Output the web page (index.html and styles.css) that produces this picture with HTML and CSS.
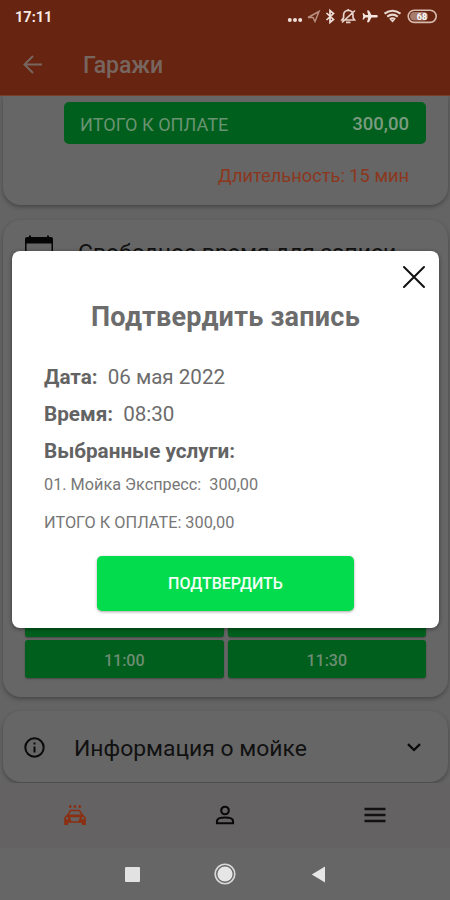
FILE: index.html
```html
<!DOCTYPE html>
<html lang="ru">
<head>
<meta charset="utf-8">
<meta name="viewport" content="width=device-width, initial-scale=1">
<title>Гаражи</title>
<link rel="stylesheet" href="styles.css">
</head>
<body>
<div class="phone">
  <header class="top">
    <div class="status">
      <span class="clock">17:11</span>
      <svg class="status-icons" width="152" height="20" viewBox="0 0 152 20" fill="none">
        <g fill="#efe0da"><circle cx="2.800" cy="13" r="2"/><circle cx="8" cy="13" r="2"/><circle cx="13.200" cy="13" r="2"/></g>
        <path d="M21 10.500 32 4.500 28 14.500 26 10.500Z" stroke="#b98f82" stroke-width="1.500"/>
        <path d="M39.500 6 46.500 12.500 43 15.500V3.500L46.500 6.500 39.500 13" stroke="#efe0da" stroke-width="1.700"/>
        <g stroke="#e6d2ca" stroke-width="1.700"><path d="M55 13H67.500L66 10.800V8A4.700 4.700 0 0 0 56.600 8V10.800ZM61.200 2V4M59 15.300H63.500M55 15.500 68 3.500"/></g>
        <path fill="#f3e5e0" d="M89.500 8H84.500L82 3.500H80L81.200 8H78.300L76.800 6.200H75.600L76.200 9.300 75.600 12.400H76.800L78.300 10.600H81.200L80 15.200H82L84.500 10.600H89.500A1.300 1.300 0 0 0 89.500 8Z"/>
        <g stroke="#e9d8d1" stroke-width="2.100"><path d="M97.500 6.700Q105.500 .9 113.500 6.700M100.200 9.600Q105.500 5.700 110.800 9.600M102.800 12.300Q105.500 10.400 108.200 12.300"/></g><path d="M103.300 13H107.700L105.500 15.600Z" fill="#e9d8d1"/>
        <rect x="121.200" y="3.200" width="28" height="12.200" rx="6.100" stroke="#d8bbb0" stroke-width="1.600"/>
        <rect x="123" y="5" width="18" height="8.600" rx="4.300" fill="#a67c6e"/>
        <text class="battery" x="135" y="12.500" text-anchor="middle" fill="#fff">68</text>
      </svg>
    </div>
    <div class="appbar">
      <svg width="20" height="20" viewBox="0 0 20 20" fill="none" stroke="#77665f" stroke-width="2"><path d="M19 9.500H2M10 1 1.500 9.500 10 18"/></svg>
      <h1 class="appbar-title">Гаражи</h1>
    </div>
  </header>

  <main class="content">
    <section class="card card-total">
      <div class="total"><span class="total-label">ИТОГО К ОПЛАТЕ</span><span class="total-sum">300,00</span></div>
      <p class="duration">Длительность: 15 мин</p>
    </section>
    <section class="card card-slots">
      <div class="slots-head">
        <svg width="28" height="30" viewBox="0 0 28 30"><path fill="#050505" d="M2 2H4V.5H6V2H22V.5H24V2H26Q28 2 28 4V28Q28 30 26 30H2Q0 30 0 28V4Q0 2 2 2ZM1.500 8.500V28H26.500V8.500Z"/></svg>
        <h2 class="slots-title">Свободное время для записи</h2>
      </div>
      <div class="slots">
        <span class="slot">10:00</span><span class="slot">10:30</span>
        <span class="slot">11:00</span><span class="slot">11:30</span>
      </div>
    </section>
    <section class="card card-info">
      <svg width="21" height="21" viewBox="0 0 21 21" fill="none" stroke="#0a0a0a" stroke-width="2"><circle cx="10.500" cy="10.500" r="9.200"/><path d="M10.500 9.500V15.500M10.500 5.500V7.600"/></svg>
      <h2 class="info-title">Информация о мойке</h2>
      <svg width="14" height="9" viewBox="0 0 14 9" fill="none" stroke="#0a0a0a" stroke-width="2.300"><path d="M1 1.200 7 7 13 1.200"/></svg>
    </section>
  </main>

  <nav class="tabs">
    <span class="tab">
      <svg width="24" height="22" viewBox="0 0 24 22" fill="none" stroke="#8b2f12" stroke-width="1.500">
        <path d="M6 2.500H8.500M10.700 2.500H13.200M15.500 2.500H18M7.200 1V4M11.900 1V4M16.800 1V4"/>
        <path d="M4.500 11.500 7.500 6.500H16.500L19.500 11.500"/>
        <path fill="#8b2f12" fill-rule="evenodd" stroke="none" d="M4 10.500H20L22.800 13.500V21H18.800V18.800H5.200V21H1.200V13.500ZM7 13.300 8.500 17.300H15.500L17 13.300ZM3 13.300V15.300H5.500L4.800 13.300ZM19.200 13.300 18.500 15.300H21V13.300Z"/>
      </svg>
    </span>
    <span class="tab">
      <svg width="20" height="20" viewBox="0 0 20 20" fill="none" stroke="#080808" stroke-width="2.100"><circle cx="10" cy="5.500" r="3.800"/><path d="M2 18.200V16Q2 12.500 10 12.500T18 16V18.200Z"/></svg>
    </span>
    <span class="tab">
      <svg width="22" height="16" viewBox="0 0 22 16" stroke="#111" stroke-width="2.400"><path d="M.5 2H21.500M.5 8H21.500M.5 14H21.500"/></svg>
    </span>
  </nav>

  <footer class="system-nav">
    <svg width="15" height="15" viewBox="0 0 15 15"><rect width="15" height="15" rx="1" fill="#e2e2e2"/></svg>
    <svg width="22" height="22" viewBox="0 0 22 22"><circle cx="11" cy="11" r="9.800" fill="none" stroke="#d8d8d8" stroke-width="1.600"/><circle cx="11" cy="11" r="7.600" fill="#e6e6e6"/></svg>
    <svg width="15" height="17" viewBox="0 0 15 17"><path d="M14 .5V16.500L.8 8.500Z" fill="#e6e6e6"/></svg>
  </footer>

  <div class="dialog" role="dialog">
    <svg class="close" width="24" height="24" viewBox="0 0 24 24" stroke="#111" stroke-width="2" stroke-linecap="round"><path d="M2 2 22 22M22 2 2 22"/></svg>
    <h2 class="dialog-title">Подтвердить запись</h2>
    <p class="row"><b>Дата:</b><span>06 мая 2022</span></p>
    <p class="row"><b>Время:</b><span>08:30</span></p>
    <p class="row"><b>Выбранные услуги:</b></p>
    <p class="service"><span>01. Мойка Экспресс:</span><span>300,00</span></p>
    <p class="sum">ИТОГО К ОПЛАТЕ: 300,00</p>
    <button class="confirm">ПОДТВЕРДИТЬ</button>
  </div>
</div>
</body>
</html>
```
FILE: styles.css
```css
* { box-sizing: border-box; }
body { margin: 0; font-family: Roboto, sans-serif; }
h1, h2, p { margin: 0; font-weight: 400; }
svg { display: block; flex: none; }

.phone {
  position: relative;
  width: 450px;
  height: 900px;
  display: flex;
  flex-direction: column;
  background: #646464;
  overflow: hidden;
  white-space: nowrap;
}

.top { height: 96px; flex: none; background: #672410; border-bottom: 1px solid #793f2b; }
.status { height: 33px; padding: 7px 12px 0 15px; display: flex; justify-content: space-between; }
.status-icons { margin-right: -1px; }
.clock { padding-top: 1px; font-size: 14.500px; line-height: 19px; font-weight: 700; color: #f5e9e4; }
.battery { font: 700 9px Roboto, sans-serif; }
.appbar { height: 63px; padding-left: 23px; display: flex; align-items: center; }
.appbar-title { margin-left: 40px; padding-top: 2px; font-size: 23px; line-height: 28px; font-weight: 500; color: #77665f; }

.content { height: 687px; flex: none; padding: 0 2px 0 3px; display: flex; flex-direction: column; gap: 15px; overflow: hidden; }
.card { flex: none; background: #666; border-radius: 18px; box-shadow: 0 2px 4px rgba(0, 0, 0, .3); }
.card-total { height: 109px; padding: 6px 22px 0 61px; border-radius: 0 0 18px 18px; }
.total { height: 42px; padding: 2px 17px 0 16px; border-radius: 5px; background: #005f1d; display: flex; justify-content: space-between; align-items: center; }
.total-label { font-size: 18.100px; color: #6a9372; }
.total-sum { font-size: 18.500px; font-weight: 500; color: #7b9b80; }
.duration { margin: 20px 17px 0 0; font-size: 18.250px; line-height: 24px; text-align: right; color: #8c371d; }

.card-slots { height: 477px; padding: 15px 22px 19px 22px; display: flex; flex-direction: column; justify-content: space-between; }
.slots-head { display: flex; }
.slots-title { margin: 4px 0 0 25px; font-size: 22.900px; line-height: 28px; color: #111; }
.slots { display: grid; grid-template-columns: 1fr 1fr; gap: 3px 4px; }
.slot { height: 38px; border-radius: 3px; background: #005f1d; box-shadow: 0 1px 2px rgba(0, 0, 0, .3); color: #6d8d72; font-size: 16px; line-height: 41px; font-weight: 500; text-align: center; }

.card-info { height: 71px; margin-top: -1px; padding: 2px 27px 0 21px; display: flex; align-items: center; }
.info-title { flex: 1; margin-left: 29px; padding-top: 2px; font-size: 22.900px; color: #111; }

.tabs { height: 65px; flex: none; background: #656263; display: grid; grid-template-columns: repeat(3, 1fr); }
.tab { display: flex; align-items: center; justify-content: center; padding: 0 0 1px; }
.system-nav { flex: 1; background: #666; display: flex; align-items: center; justify-content: center; gap: 74.500px; }

.dialog {
  position: absolute;
  left: 12px;
  top: 251px;
  width: 427px;
  height: 377px;
  padding: 50px 32px 0;
  border-radius: 8px;
  background: #fff;
  box-shadow: 0 1px 4px rgba(0, 0, 0, .45);
  color: #6c6c6c;
}
.close { position: absolute; right: 13px; top: 14px; }
.dialog-title { font-size: 27px; line-height: 32px; font-weight: 700; letter-spacing: .25px; text-align: center; color: #6c6c6c; }
.row { height: 37px; font-size: 20.600px; line-height: 37px; display: flex; gap: 10px; }
.dialog-title + .row { margin-top: 26px; }
.row b { font-weight: 700; font-size: 20.700px; color: #636363; }
.service { display: flex; gap: 8px; font-size: 16.250px; line-height: 30px; height: 30px; color: #777; }
.sum { margin-top: 8px; font-size: 16.300px; line-height: 30px; color: #777; }
.confirm {
  display: block;
  width: 257px;
  height: 55px;
  margin: 18px auto 0 53px;
  padding: 0;
  border: 0;
  border-radius: 5px;
  background: #03dd4d;
  box-shadow: 0 1px 3px rgba(0, 0, 0, .35);
  color: #f4fff7;
  font: 500 16px Roboto, sans-serif;
}
```
